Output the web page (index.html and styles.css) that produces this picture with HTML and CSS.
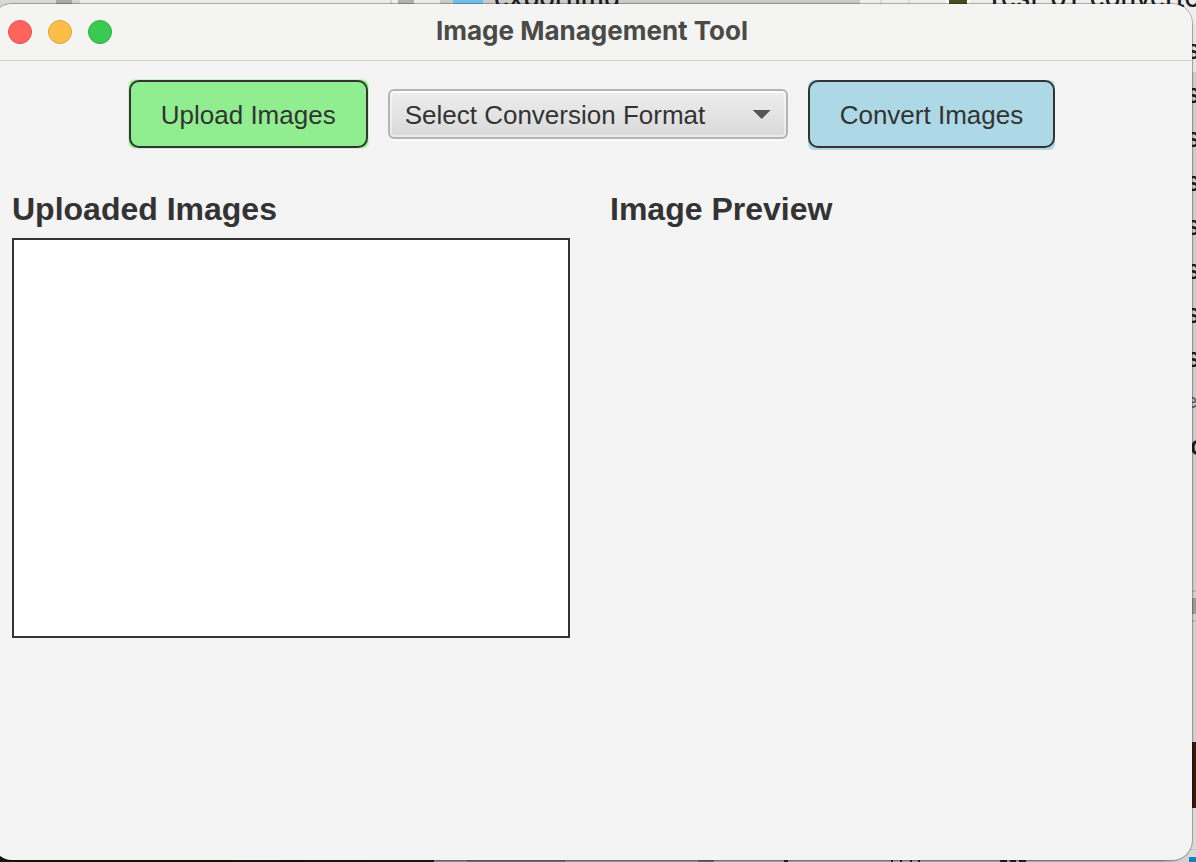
FILE: index.html
```html
<!DOCTYPE html>
<html lang="en">
<head>
<meta charset="utf-8">
<title>Image Management Tool</title>
<link rel="stylesheet" href="styles.css">
</head>
<body>
<div class="desktop" aria-hidden="true">
  <div class="strip-top"></div>
  <div class="strip-right"></div>
  <div class="strip-bottom"></div>
  <span class="file file-folder">exportimg</span>
  <span class="file file-image">Test_01_converted</span>
  <div class="file-column">
    <span>s</span><span>s</span><span>s</span><span>s</span><span>s</span><span>s</span><span>s</span><span>s</span><span class="small">ec</span><span class="strong">c</span>
  </div>
</div>
<main class="window">
  <header class="titlebar">
    <div class="lights">
      <button class="light close" aria-label="Close"></button>
      <button class="light minimize" aria-label="Minimize"></button>
      <button class="light zoom" aria-label="Zoom"></button>
    </div>
    <h1 class="title">Image Management Tool</h1>
  </header>
  <div class="toolbar">
    <button class="action upload">Upload Images</button>
    <div class="picker">
      <select class="format" aria-label="Conversion format">
        <option>Select Conversion Format</option>
      </select>
    </div>
    <button class="action convert">Convert Images</button>
  </div>
  <div class="panels">
    <section class="panel">
      <h2 class="heading">Uploaded Images</h2>
      <div class="list"></div>
    </section>
    <section class="panel">
      <h2 class="heading">Image Preview</h2>
    </section>
  </div>
</main>
</body>
</html>
```
FILE: styles.css
```css
* { box-sizing: border-box; }

body {
  margin: 0;
  height: 100vh;
  overflow: hidden;
  display: flex;
  background: #cfcfcf;
  font-family: "Liberation Sans", Arial, sans-serif;
  color: #333;
}

.desktop {
  position: absolute;
  inset: 0;
  overflow: hidden;
  font-family: Inter, sans-serif;
  font-weight: 500;
  color: #1c1c1c;
}

.strip-top {
  position: absolute;
  inset: 0 0 auto;
  height: 24px;
  background: linear-gradient(90deg,
    #dad9d7 56px, #aaa 56px 72px, #d4d4d4 72px 80px, #ececec 80px 390px,
    #d6d6d6 390px 392px, #eee 392px 398px, #b2b2b2 398px 414px, #ededed 414px 440px,
    #cbcbcb 440px 453px, #70c0ec 453px 483px, #cbcbcb 483px 860px,
    #efefef 860px 880px, #dcdcdc 880px 882px, #efefef 882px 908px,
    #dcdcdc 908px 910px, #efefef 910px 946px, #fff 946px 949px,
    #46501f 949px 967px, #fff 967px 970px, #eee 970px);
}

.strip-right {
  position: absolute;
  inset: 24px 0 0 auto;
  width: 24px;
  background: linear-gradient(180deg,
    #e4e4e4 48px, #cdcbcb 48px 566px, #b8b8b8 566px 568px, #d0d0d0 568px 574px,
    #999 574px 590px, #d0d0d0 590px 596px, #bbb 596px 598px, #cfcfcf 598px 718px,
    #32190c 718px 784px, #dadada 784px 825px, #c4c4c4 825px 826px,
    #dadada 826px 833px, #1f7fb8 833px);
}

.strip-bottom {
  position: absolute;
  inset: auto 7px 0 0;
  height: 12px;
  background: linear-gradient(90deg,
    #10180f 120px, #1c1b18 434px, #8c8c8c 434px 467px, #727272 467px 565px,
    #929292 565px 698px, #6a6a6a 698px 714px, #a2a2a2 714px 784px,
    #222 784px 788px, #a2a2a2 788px 891px, #222 891px 893px, #a2a2a2 893px 900px,
    #222 900px 902px, #a2a2a2 902px 910px, #222 910px 912px, #a2a2a2 912px 918px,
    #222 918px 920px, #a2a2a2 920px 1000px, #222 1000px 1007px, #a2a2a2 1007px 1010px,
    #222 1010px 1016px, #a2a2a2 1016px 1019px, #222 1019px 1026px,
    #a8a8a8 1026px 1160px, #d2d2d2 1180px);
}

.file {
  position: absolute;
  top: -18px;
  font-size: 26px;
  line-height: 32px;
  white-space: nowrap;
}

.file-folder { left: 494px; }
.file-image { left: 986px; }

.file-column {
  position: absolute;
  top: 27px;
  left: calc(100% - 10px);
  display: grid;
  grid-auto-rows: 44px;
  align-items: center;
  font-size: 26px;
}

.file-column .small { font-size: 20px; color: #666; }
.file-column .strong { padding-left: 4px; font-weight: 600; }

.window {
  position: relative;
  flex: 1;
  margin: 4px 4px 2px -8px;
  border-radius: 20px;
  overflow: hidden;
  background: #f4f4f4;
  box-shadow: 0 0 1px 1px rgba(0, 0, 0, 0.3);
}

.titlebar {
  display: grid;
  grid-template-columns: 1fr auto 1fr;
  align-items: center;
  height: 57px;
  padding: 0 16px;
  background: #f4f4f2;
  border-bottom: 1px solid #cdcdcd;
}

.lights { display: flex; gap: 16px; }

.light {
  width: 24px;
  height: 24px;
  padding: 0;
  border: 1px solid;
  border-radius: 50%;
}

.close { background: #ff645c; border-color: #e2504a; }
.minimize { background: #febd48; border-color: #dfa038; }
.zoom { background: #3ac951; border-color: #2eae41; }

.title {
  margin: 0;
  padding-bottom: 2px;
  font: 700 26px/32px Inter, sans-serif;
  color: #4a4a48;
}

.toolbar {
  display: flex;
  justify-content: center;
  align-items: center;
  gap: 20px;
  padding: 19px 20px 0;
}

.action {
  position: relative;
  height: 68px;
  padding: 2px 32px 0;
  border: 0;
  border-radius: 6px;
  font: 26px/32px "Liberation Sans", Arial, sans-serif;
  color: #333;
  white-space: nowrap;
}

.action::after {
  content: "";
  position: absolute;
  inset: 0;
  border: 2px solid #333;
  border-radius: 10px;
}

.upload { background: #90ee90; box-shadow: 0 0 0 1px #90ee9066; }
.convert { background: #add8e6; box-shadow: 0 2px 0 #add8e6; }

.picker { position: relative; width: 400px; }

.picker::after {
  content: "";
  position: absolute;
  top: 21px;
  right: 17px;
  width: 18px;
  height: 9px;
  background: #555;
  clip-path: polygon(0 0, 100% 0, 50% 100%);
  pointer-events: none;
}

.format {
  appearance: none;
  display: block;
  width: 100%;
  height: 50px;
  padding: 2px 15px 0;
  border: 2px solid #b5b5b5;
  border-radius: 6px;
  background: linear-gradient(#eee, #d9d9d9);
  box-shadow: inset 0 0 0 2px rgba(255, 255, 255, 0.45), inset 0 2px 0 rgba(255, 255, 255, 0.6), 0 2px 0 #fafafa;
  font: 26px/32px "Liberation Sans", Arial, sans-serif;
  color: #333;
}

.panels {
  display: grid;
  grid-template-columns: 1fr 1fr;
  gap: 40px;
  padding: 40px 24px 20px 20px;
}

.heading {
  margin: 0 0 8px;
  font-size: 32px;
  line-height: 42px;
}

.list {
  height: 400px;
  background: #fff;
  border: 2px solid #333;
}
```
